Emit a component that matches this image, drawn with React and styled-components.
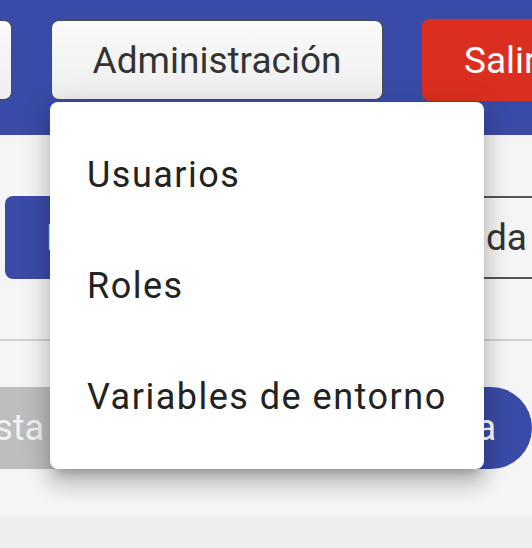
import React from "react";
import styled, { createGlobalStyle } from "styled-components";

const GlobalStyle = createGlobalStyle`
  html, body {
    margin: 0;
    padding: 0;
    background: #eeeeee;
    font-family: Roboto, "Liberation Sans", sans-serif;
    overflow: hidden;
  }
`;

function App() {
  return (
    <>
      <GlobalStyle />
      <Page>
        <Header>
          <NavButton $hidden>Inicio</NavButton>
          <MenuAnchor>
            <NavButton>Administración</NavButton>
            <Menu>
              <MenuItem>Usuarios</MenuItem>
              <MenuItem>Roles</MenuItem>
              <MenuItem>Variables de entorno</MenuItem>
            </Menu>
          </MenuAnchor>
          <ExitButton>Salir</ExitButton>
        </Header>
        <Content>
          <Toolbar>
            <PrimaryButton>Nuevo</PrimaryButton>
            <SearchField>Agenda</SearchField>
          </Toolbar>
          <Divider />
          <Actions>
            <GreyButton>Lista</GreyButton>
            <PillButton>Buscar fecha</PillButton>
          </Actions>
        </Content>
      </Page>
    </>
  );
}

const Page = styled.div`
  width: 532px;
  height: 548px;
  display: flex;
  flex-direction: column;
`;

const Header = styled.header`
  height: 135px;
  box-sizing: border-box;
  background: #3a4ba7;
  display: flex;
  align-items: flex-start;
  gap: 39px;
  padding-top: 20px;
  margin-left: -88px;
  position: relative;
  z-index: 2;
`;

const NavButton = styled.button`
  height: 80px;
  box-sizing: border-box;
  width: ${(p) => (p.$hidden ? "100px" : "332px")};
  border: 1.5px solid #4a4a4a;
  border-radius: 8px;
  background: linear-gradient(#fafafa, #eeeeee);
  color: ${(p) => (p.$hidden ? "transparent" : "#333333")};
  font-family: Roboto, "Liberation Sans", sans-serif;
  font-size: 37px;
  padding: 0;
  flex-shrink: 0;
`;

const MenuAnchor = styled.div`
  position: relative;
  flex-shrink: 0;
`;

const Menu = styled.ul`
  position: absolute;
  top: 82px;
  left: -1px;
  width: 434px;
  height: 367px;
  box-sizing: border-box;
  margin: 0;
  padding: 17px 0;
  list-style: none;
  background: #ffffff;
  border-radius: 8px;
  box-shadow: 0 10px 10px -6px rgba(0, 0, 0, 0.2),
    0 16px 20px 2px rgba(0, 0, 0, 0.14), 0 6px 28px 4px rgba(0, 0, 0, 0.12);
  display: flex;
  flex-direction: column;
`;

const MenuItem = styled.li`
  height: 111px;
  display: flex;
  align-items: center;
  padding: 0 37px;
  font-size: 36px;
  letter-spacing: 1.5px;
  color: #222222;
  white-space: nowrap;
`;

const ExitButton = styled.button`
  height: 82px;
  margin-top: -1px;
  width: 180px;
  flex-shrink: 0;
  border: none;
  border-radius: 8px;
  background: #db2e20;
  color: #ffffff;
  font-family: Roboto, "Liberation Sans", sans-serif;
  font-size: 37px;
  text-align: left;
  padding: 0 0 0 42px;
`;

const Content = styled.main`
  height: 382px;
  background: #f5f5f5;
  display: flex;
  flex-direction: column;
  padding-top: 61px;
  box-sizing: border-box;
`;

const Toolbar = styled.div`
  display: flex;
  align-items: stretch;
  height: 83px;
  padding-left: 5px;
  gap: 40px;
`;

const PrimaryButton = styled.button`
  width: 160px;
  border: none;
  border-radius: 8px;
  background: #3a4ba7;
  color: #ffffff;
  font-family: Roboto, "Liberation Sans", sans-serif;
  font-size: 36px;
  text-align: left;
  padding: 0 0 0 41px;
`;

const SearchField = styled.div`
  flex: 1;
  margin-right: -30px;
  border-top: 2px solid #555555;
  border-bottom: 2px solid #555555;
  display: flex;
  align-items: center;
  justify-content: flex-end;
  padding-right: 35px;
  font-size: 37px;
  color: #333333;
`;

const Divider = styled.hr`
  margin: 60px 0 0;
  border: none;
  height: 2px;
  background: #d0d0d0;
`;

const Actions = styled.div`
  display: flex;
  justify-content: space-between;
  height: 82px;
  margin-top: 46px;
`;

const GreyButton = styled.button`
  border: none;
  background: #bdbdbd;
  color: #f2f2f2;
  font-family: Roboto, "Liberation Sans", sans-serif;
  font-size: 36px;
  width: 200px;
  margin-left: -100px;
  text-align: left;
  padding: 0 0 0 66px;
  white-space: nowrap;
`;

const PillButton = styled.button`
  border: none;
  background: #3a4ba7;
  color: #ffffff;
  font-family: Roboto, "Liberation Sans", sans-serif;
  font-size: 36px;
  width: 300px;
  border-radius: 0 41px 41px 0;
  text-align: right;
  padding-right: 36px;
  white-space: nowrap;
`;

export default App;
